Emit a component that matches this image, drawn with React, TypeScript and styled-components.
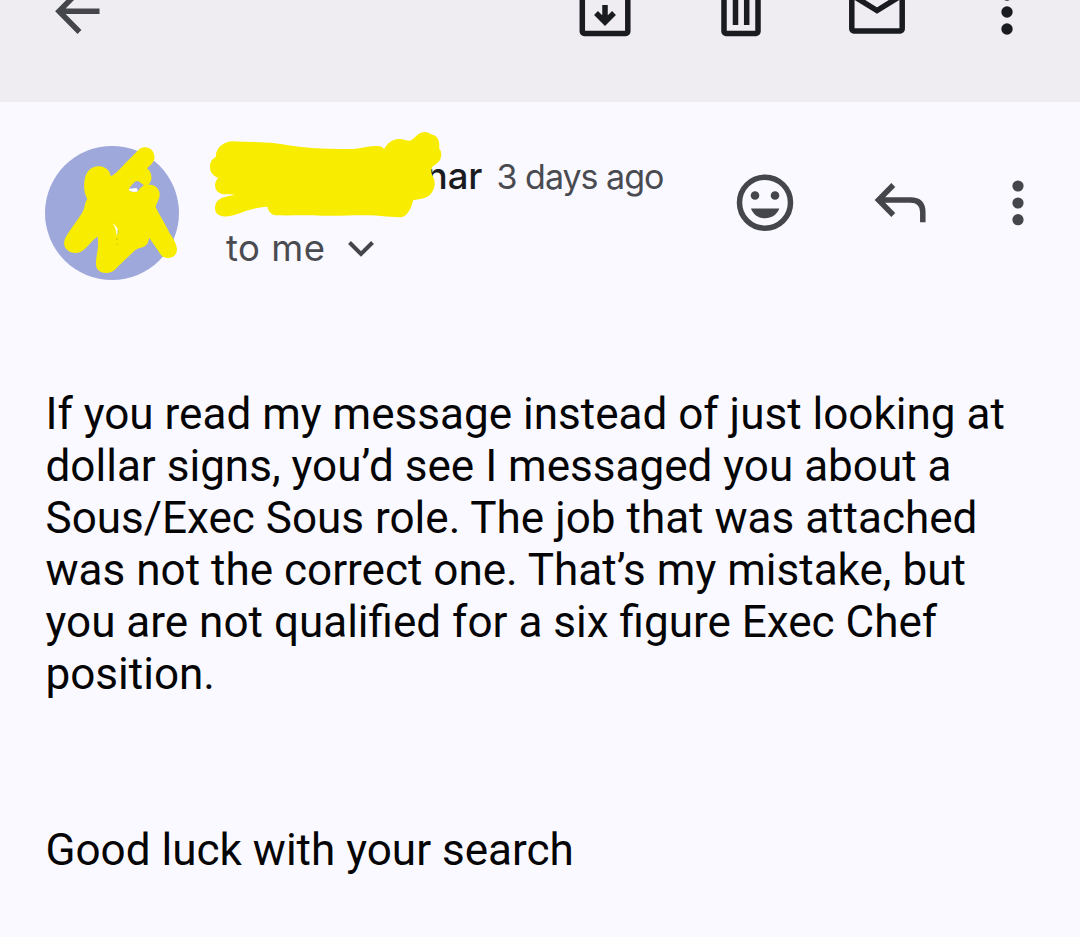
import React from "react";
import styled, { createGlobalStyle } from "styled-components";

const GlobalStyle = createGlobalStyle`
  * {
    box-sizing: border-box;
  }
  body {
    margin: 0;
    background-color: #faf9ff;
    font-family: Roboto, "Liberation Sans", sans-serif;
  }
`;

const Page = styled.main`
  width: 1080px;
  height: 937px;
  overflow: hidden;
  background-color: #faf9ff;
`;

const TopBar = styled.header`
  display: flex;
  justify-content: space-between;
  height: 102px;
  padding: 0 43px 0 48px;
  background-color: #efedf2;
`;

const TopActions = styled.div`
  display: flex;
  gap: 76px;
`;

const Icon = styled.svg<{ $color?: string }>`
  display: block;
  flex: none;
  color: ${({ $color }) => $color ?? "#191b20"};
  fill: none;
  stroke: currentColor;
  stroke-width: 5.5;

  .solid {
    fill: currentColor;
    stroke: none;
  }
`;

const MoreIcon = styled(Icon)<{ $shift: number }>`
  margin-left: -${({ $shift }) => $shift}px;
`;

const MessageHeader = styled.section`
  display: flex;
  align-items: flex-start;
  height: 208px;
  padding: 44px 32px 0 45px;
`;

const Avatar = styled.div`
  position: relative;
  flex: none;
  width: 134px;
  height: 134px;
  border-radius: 50%;
  background-color: #9fa8db;
`;

const Scribble = styled.svg<{ $left: number; $top: number }>`
  position: absolute;
  left: ${({ $left }) => $left}px;
  top: ${({ $top }) => $top}px;
  fill: #f8ed00;
`;

const SenderInfo = styled.div`
  flex: none;
  width: 490px;
  margin-left: 47px;
  font-family: Inter, Roboto, sans-serif;
`;

const SenderLine = styled.div`
  position: relative;
  display: flex;
  align-items: baseline;
  height: 62px;
  padding-top: 9px;
  line-height: 42px;
`;

const SenderName = styled.span`
  width: 256.5px;
  text-align: right;
  font-size: 36.5px;
  font-weight: 500;
  color: #191b20;
`;

const SentTime = styled.span`
  margin-left: 14px;
  font-size: 34px;
  letter-spacing: -1px;
  color: #4a4b51;
  white-space: nowrap;
`;

const Recipient = styled.div`
  display: flex;
  align-items: center;
  gap: 21px;
  height: 80px;
  font-size: 36.5px;
  letter-spacing: 0.5px;
  color: #4a4b51;
`;

const MessageActions = styled.div`
  display: flex;
  gap: 76px;
  margin: 27px 0 0 19px;
`;

const MessageBody = styled.article`
  padding: 78px 40px 0 45.5px;
  font-size: 44.06px;
  line-height: 52px;
  color: #050506;
`;

const Paragraph = styled.p`
  margin: 0 0 124px;
`;

const Line = styled.span`
  display: block;
  white-space: nowrap;
`;

const GREY = "#45464c";

function App() {
  return (
    <Page>
      <GlobalStyle />
      <TopBar>
        <Icon $color={GREY} width="60" height="40" viewBox="48 0 60 40">
          <path d="M99.500 11.300H60M80-10 59 11.300 79.500 32" />
        </Icon>
        <TopActions>
          <Icon width="60" height="40" viewBox="575 0 60 40">
            <path d="M582.300-5V31.500a2 2 0 0 0 2 2H625.800a2 2 0 0 0 2-2V-5M605 5V22M596 13l9 9 9-9" />
          </Icon>
          <Icon width="60" height="40" viewBox="711 0 60 40">
            <path d="M724-5V31.500a2 2 0 0 0 2 2H756a2 2 0 0 0 2-2V-5M735.500-5V25M746.700-5V25" />
          </Icon>
          <Icon width="60" height="40" viewBox="847 0 60 40">
            <path d="M851.800-5V29a2 2 0 0 0 2 2H900.200a2 2 0 0 0 2-2V-5M851-5.500 877 10.500 903-5.500" />
          </Icon>
          <MoreIcon $shift={6} width="60" height="40" viewBox="977 0 60 40">
            <g className="solid">
              <circle cx="1007" cy="-5" r="5.700" />
              <circle cx="1007" cy="12" r="5.700" />
              <circle cx="1007" cy="29" r="5.700" />
            </g>
          </MoreIcon>
        </TopActions>
      </TopBar>

      <MessageHeader>
        <Avatar>
          <Scribble $left={-15} $top={-16} width="170" height="160" viewBox="0 0 510 480">
            <path
              fillRule="evenodd"
              d="M345 52C363 52 376 68 373 87C371 99 358 108 351 115C362 122 368 141 362 154C360 160 356 163 356 165C370 161 388 174 389 192C390 207 378 222 377 231C390 258 410 290 420 311C430 325 441 345 441 359C440 376 426 386 410 384C396 383 390 371 383 360L358 324C354 330 357 340 345 348C337 354 329 352 316 360C297 378 275 399 257 417C245 430 222 433 208 423C196 415 197 402 199 383C203 361 206 344 203 320C190 326 178 345 164 357C150 373 123 372 111 359C101 350 100 337 106 324C119 300 146 267 159 243C166 231 162 220 172 207C162 193 160 165 165 144C171 120 188 108 208 109C225 110 240 121 242 138C248 139 252 132 260 127C276 109 299 87 320 65C327 57 334 52 345 52ZM298 174C307 164 314 153 323 153C330 155 336 163 342 165C334 172 326 178 324 184C316 188 306 185 298 182Z"
            />
            <path fill="#fff" d="M298 176 320 174 324 184Q308 189 297 181ZM248 280C256 287 264 292 265 308C262 312 261 312 259 316C260 302 256 293 248 280Z" />
            <path fill="#a9a900" d="M263 300h2v9l-2 5ZM260 324h2v6h-2ZM260 341h2v5h-2Z" />
          </Scribble>
        </Avatar>

        <SenderInfo>
          <SenderLine>
            <SenderName>nar</SenderName>
            <SentTime>3 days ago</SentTime>
            <Scribble $left={-26} $top={-26} width="260" height="160" viewBox="0 0 780 480">
              <path d="M95 64C140 66 190 65 225 70C255 73 275 79 310 82C360 87 410 87 460 87C485 84 510 77 535 78C545 79 550 85 553 86C561 70 578 57 598 57C611 57 619 63 628 62C642 61 650 38 673 36C686 36 691 43 698 44C713 48 721 64 717 84C727 96 726 117 714 127C707 135 696 138 695 146C693 153 694 160 699 170C708 184 705 205 695 218C684 235 661 237 640 240C635 260 626 284 608 291C577 294 542 286 506 286C467 285 420 288 365 287C318 285 270 287 228 286C211 284 205 271 202 260C167 262 139 272 112 282C91 289 75 293 58 286C43 280 42 260 50 246C61 230 85 229 105 224C85 223 66 226 54 216C41 205 43 186 55 173C43 169 31 159 30 143C29 126 37 116 48 110C46 89 65 67 95 64Z" />
            </Scribble>
          </SenderLine>
          <Recipient>
            to me
            <Icon $color={GREY} width="28" height="20" viewBox="347 238.500 28 20">
              <path strokeWidth="4" d="M349.500 243 361 254.500 372.500 243" />
            </Icon>
          </Recipient>
        </SenderInfo>

        <MessageActions>
          <Icon $color={GREY} width="60" height="60" viewBox="735 173 60 60">
            <circle cx="765" cy="202.700" r="25.500" />
            <g className="solid">
              <circle cx="755" cy="195.500" r="4.300" />
              <circle cx="775" cy="195.500" r="4.300" />
              <path d="M751 208.500H779.300C777 214.500 771.500 218.300 765 218.300S753 214.500 751 208.500Z" />
            </g>
          </Icon>
          <Icon $color={GREY} width="60" height="60" viewBox="871 173 60 60">
            <path d="M893.300 185 878.500 200 893.300 215M878.500 200H910.500Q922.800 200 922.800 212.300V222.300" />
          </Icon>
          <MoreIcon $color={GREY} $shift={24} width="60" height="60" viewBox="983 173 60 60">
            <g className="solid">
              <circle cx="1018" cy="186" r="5.600" />
              <circle cx="1018" cy="203" r="5.600" />
              <circle cx="1018" cy="219.700" r="5.600" />
            </g>
          </MoreIcon>
        </MessageActions>
      </MessageHeader>

      <MessageBody>
        <Paragraph>
          <Line>If you read my message instead of just looking at</Line>
          <Line>dollar signs, you’d see I messaged you about a</Line>
          <Line>Sous/Exec Sous role. The job that was attached</Line>
          <Line>was not the correct one. That’s my mistake, but</Line>
          <Line>you are not qualified for a six figure Exec Chef</Line>
          <Line>position.</Line>
        </Paragraph>
        <Paragraph>
          <Line>Good luck with your search</Line>
        </Paragraph>
      </MessageBody>
    </Page>
  );
}

export default App;
